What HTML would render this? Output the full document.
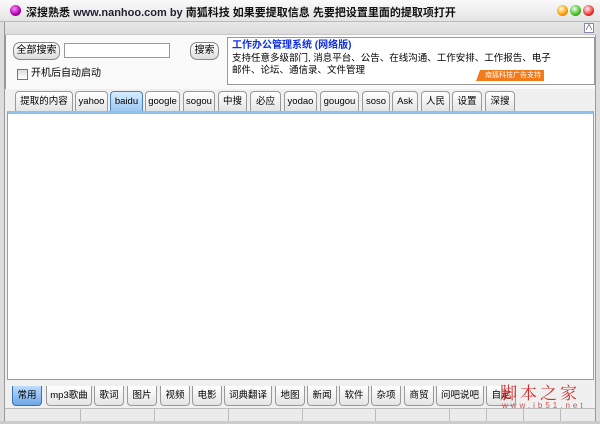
<!DOCTYPE html><html><head><meta charset="utf-8"><style>
*{margin:0;padding:0;box-sizing:border-box}
body{width:600px;height:424px;overflow:hidden;background:#f0f0f0;font-family:"Liberation Sans","Noto Sans CJK SC",sans-serif;font-size:11px;color:#000;position:relative}
.a{position:absolute}
.tb{left:0;top:0;width:600px;height:22px;background:linear-gradient(#fafafa,#e4e4e4);border-bottom:1px solid #bbb}
.tool{left:5px;top:22px;width:591px;height:13px;background:linear-gradient(#e8e8e8,#dcdcdc);border-bottom:1px solid #c8c8c8}
.panel{left:5px;top:35px;width:591px;height:54px;background:#fafafa;border-left:1px solid #999;border-right:1px solid #999}
.btn{border:1px solid #888;border-radius:7px;background:linear-gradient(#fff,#ddd);text-align:center;line-height:16px;font-size:10px}
.tab{top:91px;height:20px;border:1px solid #999;border-bottom:none;border-radius:4px 4px 0 0;background:linear-gradient(#fff,#e4e4e4);text-align:center;line-height:20px;font-size:9.5px}
.btab{top:386px;height:20px;border:1px solid #999;border-top:none;border-radius:0 0 4px 4px;background:linear-gradient(#fff,#e4e4e4);text-align:center;line-height:19px;font-size:9.5px}
.dot{width:11px;height:11px;border-radius:50%;top:5px}
</style></head><body>
<div class="a tb"></div>
<div class="a dot" style="left:10px;background:radial-gradient(circle at 40% 35%,#f8f,#a0a 60%,#505)"></div>
<div class="a" style="left:26px;top:4px;font-size:11px;font-weight:bold;white-space:nowrap;color:#111">深搜熟悉 <span style="color:#223">www.nanhoo.com by</span> 南狐科技 如果要提取信息 先要把设置里面的提取项打开</div>
<div class="a dot" style="left:557px;background:radial-gradient(circle at 40% 35%,#ffd,#f90 60%,#a50)"></div>
<div class="a dot" style="left:570px;background:radial-gradient(circle at 40% 35%,#efe,#4b2 60%,#260)"></div>
<div class="a dot" style="left:583px;background:radial-gradient(circle at 40% 35%,#fee,#e33 60%,#800)"></div>
<div class="a" style="left:0;top:22px;width:5px;height:402px;background:#ddd;border-right:1px solid #999"></div>
<div class="a" style="left:595px;top:22px;width:5px;height:402px;background:#ddd;border-left:1px solid #999"></div>
<div class="a tool"></div>
<div class="a" style="left:584px;top:23px;width:10px;height:10px;border:1px solid #88a;background:#fff;font-size:8px;line-height:8px;text-align:center;color:#236">&#8743;</div>
<div class="a panel"></div>
<div class="a btn" style="left:13px;top:42px;width:47px;height:18px">全部搜索</div>
<div class="a" style="left:64px;top:43px;width:106px;height:15px;border:1px solid #999;background:#fff"></div>
<div class="a btn" style="left:190px;top:42px;width:29px;height:18px">搜索</div>
<div class="a" style="left:17px;top:69px;width:11px;height:11px;border:1px solid #777;background:linear-gradient(#ddd,#fff)"></div>
<div class="a" style="left:31px;top:67px;font-size:10px;line-height:14px">开机后自动启动</div>
<div class="a" style="left:227px;top:37px;width:368px;height:48px;border:1px solid #999;background:#fff"></div>
<div class="a" style="left:232px;top:40px;font-size:10px;line-height:12px;font-weight:bold;color:#1030e0;white-space:nowrap">工作办公管理系统 (网络版)</div>
<div class="a" style="left:232px;top:53px;width:322px;font-size:9.5px;line-height:12px">支持任意多级部门, 消息平台、公告、在线沟通、工作安排、工作报告、电子邮件、论坛、通信录、文件管理</div>
<div class="a" style="left:476px;top:70px;width:68px;height:11px;background:#f27a1a;clip-path:polygon(6% 0,100% 0,100% 100%,0 100%);color:#fff;font-size:7px;line-height:11px;text-align:right;padding-right:3px">南狐科技广告支持</div>
<div class="a" style="left:7px;top:111px;width:587px;height:269px;background:#fff;border:1px solid #99b;border-top:3px solid #8ec2ea"></div>
<div class="a tab" style="left:15px;width:58px">提取的内容</div>
<div class="a tab" style="left:75px;width:33px">yahoo</div>
<div class="a tab" style="left:110px;width:33px;background:linear-gradient(#d8ecff,#9cc8f0);border-color:#4a7fc0">baidu</div>
<div class="a tab" style="left:145px;width:35px">google</div>
<div class="a tab" style="left:183px;width:32px">sogou</div>
<div class="a tab" style="left:218px;width:29px">中搜</div>
<div class="a tab" style="left:250px;width:31px">必应</div>
<div class="a tab" style="left:284px;width:33px">yodao</div>
<div class="a tab" style="left:320px;width:39px">gougou</div>
<div class="a tab" style="left:362px;width:28px">soso</div>
<div class="a tab" style="left:392px;width:26px">Ask</div>
<div class="a tab" style="left:421px;width:29px">人民</div>
<div class="a tab" style="left:452px;width:30px">设置</div>
<div class="a tab" style="left:485px;width:30px">深搜</div>
<div class="a btab" style="left:12px;width:30px;background:linear-gradient(#bcdcff,#6ea6e6);border:1px solid #3a6fb0;border-top:none">常用</div>
<div class="a btab" style="left:46px;width:46px">mp3歌曲</div>
<div class="a btab" style="left:94px;width:30px">歌词</div>
<div class="a btab" style="left:127px;width:30px">图片</div>
<div class="a btab" style="left:160px;width:30px">视频</div>
<div class="a btab" style="left:192px;width:30px">电影</div>
<div class="a btab" style="left:224px;width:48px">词典翻译</div>
<div class="a btab" style="left:275px;width:30px">地图</div>
<div class="a btab" style="left:307px;width:30px">新闻</div>
<div class="a btab" style="left:339px;width:30px">软件</div>
<div class="a btab" style="left:371px;width:30px">杂项</div>
<div class="a btab" style="left:404px;width:30px">商贸</div>
<div class="a btab" style="left:436px;width:48px">问吧说吧</div>
<div class="a btab" style="left:486px;width:30px">自定义</div>
<div class="a" style="left:500px;top:382px;font-size:17px;line-height:20px;color:#d03030;font-family:'Noto Serif CJK SC',serif;letter-spacing:3px">脚本之家</div>
<div class="a" style="left:502px;top:401px;font-size:8px;line-height:9px;color:#d05050;letter-spacing:3px">www.jb51.net</div>
<div class="a" style="left:5px;top:408px;width:590px;height:14px;border-top:1px solid #bbb;background:#ebebeb;display:flex">
<div style="width:76px;border-right:1px solid #bbb"></div><div style="width:74px;border-right:1px solid #bbb"></div><div style="width:74px;border-right:1px solid #bbb"></div><div style="width:74px;border-right:1px solid #bbb"></div><div style="width:73px;border-right:1px solid #bbb"></div><div style="width:74px;border-right:1px solid #bbb"></div><div style="width:37px;border-right:1px solid #bbb"></div><div style="width:37px;border-right:1px solid #bbb"></div><div style="width:37px;border-right:1px solid #bbb"></div></div>
<div class="a" style="left:0;top:421px;width:600px;height:3px;background:#ccc"></div>
</body></html>
